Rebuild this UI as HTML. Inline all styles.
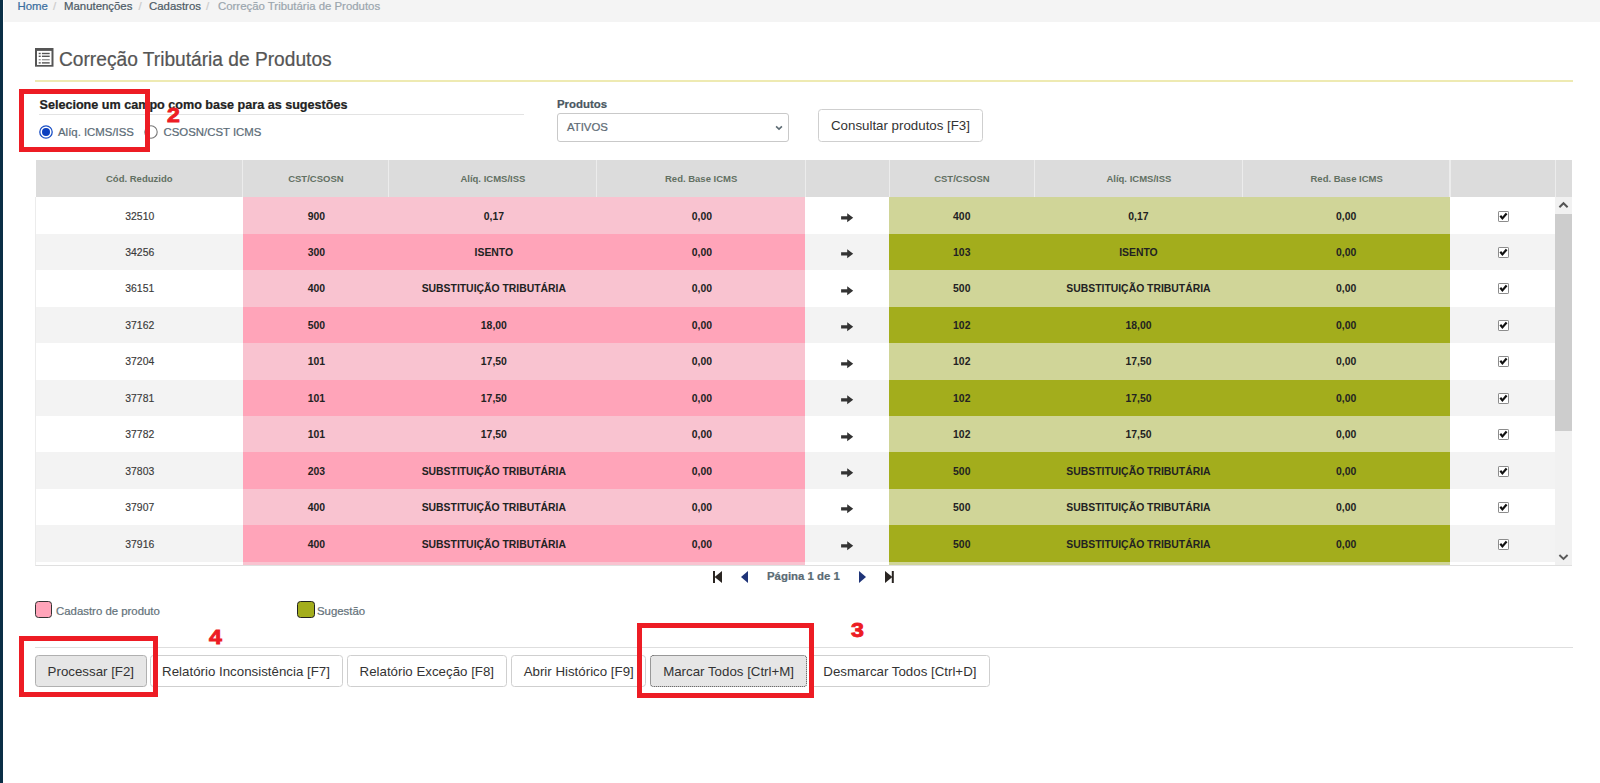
<!DOCTYPE html><html><head><meta charset="utf-8"><title>Correção Tributária de Produtos</title><style>
*{box-sizing:border-box;margin:0;padding:0}
html,body{width:1600px;height:783px;overflow:hidden;background:#fff;font-family:"Liberation Sans",sans-serif;position:relative}
.ct,.t{-webkit-text-stroke:0.22px currentColor}

.a{position:absolute}
.lbar{left:0;top:0;width:3px;height:783px;background:#0a2f46}
.crumb{left:4px;top:0;width:1596px;height:21.5px;background:#f4f4f4}
.ct{position:absolute;top:0.4px;font-size:11.4px;line-height:13px;white-space:nowrap}
.t{white-space:nowrap}
.cell{position:absolute;display:flex;align-items:center;justify-content:center;font-weight:bold;font-size:10.4px;color:#222;white-space:nowrap;padding-top:1px}
.hcell{position:absolute;display:flex;align-items:center;justify-content:center;font-weight:bold;font-size:9.5px;color:#627062;white-space:nowrap}
.btn{position:absolute;top:655px;height:32px;border:1px solid #cfcfcf;border-radius:3.5px;background:#fff;color:#333;font-size:13.3px;display:flex;align-items:center;justify-content:center;white-space:nowrap}
.btn.act{background:#e6e6e6;border-color:#b0b0b0}
.red{position:absolute;border:5px solid #ed1c24}
.num{position:absolute;color:#ed1c24;font-weight:bold;font-size:20.5px;line-height:20px;-webkit-text-stroke:0.9px #ed1c24;transform:scaleX(1.13);transform-origin:0 0}
</style></head><body>
<div class="a lbar"></div>
<div class="a crumb"></div>
<span class="ct" style="left:17.5px;color:#3b6fa0">Home</span>
<span class="ct" style="left:53px;color:#ccc">/</span>
<span class="ct" style="left:64px;color:#4d5b66">Manutenções</span>
<span class="ct" style="left:138.5px;color:#ccc">/</span>
<span class="ct" style="left:149px;color:#4d5b66">Cadastros</span>
<span class="ct" style="left:206px;color:#ccc">/</span>
<span class="ct" style="left:218px;color:#9ba6ae">Correção Tributária de Produtos</span>
<svg class="a" style="left:35.2px;top:48px" width="18.5" height="18.7" viewBox="0 0 18.5 18.7">
<rect x="0" y="0" width="18.5" height="18.7" fill="#555"/>
<rect x="2" y="2.9" width="14.5" height="14.1" fill="#fff"/>
<rect x="3.7" y="4.8" width="2" height="1.4" fill="#555"/><rect x="6.9" y="4.8" width="7.8" height="1.4" fill="#555"/>
<rect x="3.7" y="7.6" width="2" height="1.4" fill="#555"/><rect x="6.9" y="7.6" width="7.8" height="1.4" fill="#555"/>
<rect x="3.7" y="11" width="2" height="1.4" fill="#999"/><rect x="6.9" y="11" width="7.8" height="1.4" fill="#999"/>
<rect x="3.7" y="14.2" width="2" height="1.4" fill="#555"/><rect x="6.9" y="14.2" width="7.8" height="1.4" fill="#555"/>
</svg>
<span class="a t" style="left:58.5px;top:47px;font-size:20px;line-height:24px;color:#555;transform:scaleX(0.958);transform-origin:0 0">Correção Tributária de Produtos</span>
<div class="a" style="left:34.5px;top:80px;width:1538.5px;height:2px;background:#eeeab2"></div>
<span class="a t" style="left:39.5px;top:98px;font-size:12.6px;line-height:15px;font-weight:bold;color:#222">Selecione um campo como base para as sugestões</span>
<div class="a" style="left:39px;top:114px;width:484.5px;height:1px;background:#e3e3e3"></div>
<svg class="a" style="left:39px;top:125px" width="14" height="14" viewBox="0 0 14 14">
<circle cx="7" cy="7" r="6.2" fill="#fff" stroke="#1a4fc4" stroke-width="1.3"/>
<circle cx="7" cy="7" r="4" fill="#0b3fbf"/></svg>
<span class="a t" style="left:58px;top:125.5px;font-size:11.4px;line-height:13px;color:#5b6b76">Alíq. ICMS/ISS</span>
<svg class="a" style="left:144px;top:125px" width="14" height="14" viewBox="0 0 14 14">
<circle cx="7" cy="7" r="6.2" fill="#fff" stroke="#777" stroke-width="1.1"/></svg>
<span class="a t" style="left:163.5px;top:125.5px;font-size:11.4px;line-height:13px;color:#5b6b76">CSOSN/CST ICMS</span>
<span class="a t" style="left:557px;top:97.5px;font-size:11.4px;line-height:13px;font-weight:bold;color:#4a5761">Produtos</span>
<div class="a" style="left:557px;top:113px;width:232px;height:29px;border:1px solid #c9c9c9;border-radius:3px;background:#fff"></div>
<span class="a t" style="left:567px;top:121px;font-size:11.4px;line-height:13px;color:#5e6b75">ATIVOS</span>
<svg class="a" style="left:775.4px;top:125px" width="8" height="6" viewBox="0 0 8 6"><path d="M1.1 1.3 L4 4.1 L6.9 1.3" fill="none" stroke="#5d6b73" stroke-width="1.6"/></svg>
<div class="btn" style="left:818px;top:109px;width:165px;height:33px">Consultar produtos [F3]</div>
<div class="a" style="left:35.5px;top:160px;width:1536.5px;height:37px;background:#dcdcdc"></div>
<div class="a" style="left:242.0px;top:160px;width:1.2px;height:37px;background:#ececec"></div>
<div class="a" style="left:387.8px;top:160px;width:1.2px;height:37px;background:#ececec"></div>
<div class="a" style="left:596.0px;top:160px;width:1.2px;height:37px;background:#ececec"></div>
<div class="a" style="left:804.8px;top:160px;width:1.2px;height:37px;background:#ececec"></div>
<div class="a" style="left:888.8px;top:160px;width:1.2px;height:37px;background:#ececec"></div>
<div class="a" style="left:1033.9px;top:160px;width:1.2px;height:37px;background:#ececec"></div>
<div class="a" style="left:1242.1px;top:160px;width:1.2px;height:37px;background:#ececec"></div>
<div class="a" style="left:1449.4px;top:160px;width:1.2px;height:37px;background:#ececec"></div>
<div class="a" style="left:1554.9px;top:160px;width:1.2px;height:37px;background:#ececec"></div>
<div class="hcell" style="left:35.5px;top:160px;width:207.50px;height:37px">Cód. Reduzido</div>
<div class="hcell" style="left:243px;top:160px;width:145.80px;height:37px">CST/CSOSN</div>
<div class="hcell" style="left:388.8px;top:160px;width:208.20px;height:37px">Alíq. ICMS/ISS</div>
<div class="hcell" style="left:597px;top:160px;width:208.30px;height:37px">Red. Base ICMS</div>
<div class="hcell" style="left:889px;top:160px;width:145.80px;height:37px">CST/CSOSN</div>
<div class="hcell" style="left:1034.8px;top:160px;width:208.20px;height:37px">Alíq. ICMS/ISS</div>
<div class="hcell" style="left:1243px;top:160px;width:207.30px;height:37px">Red. Base ICMS</div>
<div class="a" style="left:35px;top:197px;width:1537px;height:369px;overflow:hidden;border-left:1px solid #ececec;border-bottom:1px solid #e0e0e0">
<div class="cell" style="left:0.00px;top:0.30px;width:207.00px;height:36.45px;background:#fff;color:#3a3a3a;font-weight:normal;-webkit-text-stroke:0.15px #3a3a3a;padding-left:0.50px;">32510</div>
<div class="cell" style="left:207.00px;top:0.30px;width:145.80px;height:36.45px;background:#f9c3d0;color:#222;padding-left:0.80px;">900</div>
<div class="cell" style="left:352.80px;top:0.30px;width:208.20px;height:36.45px;background:#f9c3d0;color:#222;padding-left:1.90px;">0,17</div>
<div class="cell" style="left:561.00px;top:0.30px;width:208.30px;height:36.45px;background:#f9c3d0;color:#222;padding-left:1.40px;">0,00</div>
<div class="cell" style="left:769.30px;top:0.30px;width:83.70px;height:36.45px;background:#fff;color:#222;padding-right:0.00px;"><svg width="13" height="10" viewBox="0 0 13 10" style="position:relative;top:1.8px;left:0.5px"><path d="M0.1 3.2 H6.2 V0.2 L12.2 4.7 L6.2 9.2 V6.4 H0.1 Z" fill="#333"/></svg></div>
<div class="cell" style="left:853.00px;top:0.30px;width:145.80px;height:36.45px;background:#d0d598;color:#222;padding-right:0.30px;">400</div>
<div class="cell" style="left:998.80px;top:0.30px;width:208.20px;height:36.45px;background:#d0d598;color:#222;padding-right:0.90px;">0,17</div>
<div class="cell" style="left:1207.00px;top:0.30px;width:207.30px;height:36.45px;background:#d0d598;color:#222;padding-right:0.90px;">0,00</div>
<div class="cell" style="left:1414.30px;top:0.30px;width:105.00px;height:36.45px;background:#fff;color:#222;padding-right:0.00px;"><svg width="11" height="11" viewBox="0 0 11 11" style="position:relative;top:0px;left:1.2px"><rect x="0.5" y="0.5" width="10" height="10" rx="0.6" fill="#fff" stroke="#8c8c8c"/><path d="M2.3 4.8 L4.4 7.4 L8.6 2.5" fill="none" stroke="#111" stroke-width="2.2"/></svg></div>
<div class="cell" style="left:0.00px;top:36.75px;width:207.00px;height:36.45px;background:#f3f3f3;color:#3a3a3a;font-weight:normal;-webkit-text-stroke:0.15px #3a3a3a;padding-left:0.50px;">34256</div>
<div class="cell" style="left:207.00px;top:36.75px;width:145.80px;height:36.45px;background:#ffa4b9;color:#222;padding-left:0.80px;">300</div>
<div class="cell" style="left:352.80px;top:36.75px;width:208.20px;height:36.45px;background:#ffa4b9;color:#222;padding-left:1.90px;">ISENTO</div>
<div class="cell" style="left:561.00px;top:36.75px;width:208.30px;height:36.45px;background:#ffa4b9;color:#222;padding-left:1.40px;">0,00</div>
<div class="cell" style="left:769.30px;top:36.75px;width:83.70px;height:36.45px;background:#f3f3f3;color:#222;padding-right:0.00px;"><svg width="13" height="10" viewBox="0 0 13 10" style="position:relative;top:1.8px;left:0.5px"><path d="M0.1 3.2 H6.2 V0.2 L12.2 4.7 L6.2 9.2 V6.4 H0.1 Z" fill="#333"/></svg></div>
<div class="cell" style="left:853.00px;top:36.75px;width:145.80px;height:36.45px;background:#a3ad1c;color:#222;padding-right:0.30px;">103</div>
<div class="cell" style="left:998.80px;top:36.75px;width:208.20px;height:36.45px;background:#a3ad1c;color:#222;padding-right:0.90px;">ISENTO</div>
<div class="cell" style="left:1207.00px;top:36.75px;width:207.30px;height:36.45px;background:#a3ad1c;color:#222;padding-right:0.90px;">0,00</div>
<div class="cell" style="left:1414.30px;top:36.75px;width:105.00px;height:36.45px;background:#f3f3f3;color:#222;padding-right:0.00px;"><svg width="11" height="11" viewBox="0 0 11 11" style="position:relative;top:0px;left:1.2px"><rect x="0.5" y="0.5" width="10" height="10" rx="0.6" fill="#fff" stroke="#8c8c8c"/><path d="M2.3 4.8 L4.4 7.4 L8.6 2.5" fill="none" stroke="#111" stroke-width="2.2"/></svg></div>
<div class="cell" style="left:0.00px;top:73.20px;width:207.00px;height:36.45px;background:#fff;color:#3a3a3a;font-weight:normal;-webkit-text-stroke:0.15px #3a3a3a;padding-left:0.50px;">36151</div>
<div class="cell" style="left:207.00px;top:73.20px;width:145.80px;height:36.45px;background:#f9c3d0;color:#222;padding-left:0.80px;">400</div>
<div class="cell" style="left:352.80px;top:73.20px;width:208.20px;height:36.45px;background:#f9c3d0;color:#222;padding-left:1.90px;">SUBSTITUIÇÃO TRIBUTÁRIA</div>
<div class="cell" style="left:561.00px;top:73.20px;width:208.30px;height:36.45px;background:#f9c3d0;color:#222;padding-left:1.40px;">0,00</div>
<div class="cell" style="left:769.30px;top:73.20px;width:83.70px;height:36.45px;background:#fff;color:#222;padding-right:0.00px;"><svg width="13" height="10" viewBox="0 0 13 10" style="position:relative;top:1.8px;left:0.5px"><path d="M0.1 3.2 H6.2 V0.2 L12.2 4.7 L6.2 9.2 V6.4 H0.1 Z" fill="#333"/></svg></div>
<div class="cell" style="left:853.00px;top:73.20px;width:145.80px;height:36.45px;background:#d0d598;color:#222;padding-right:0.30px;">500</div>
<div class="cell" style="left:998.80px;top:73.20px;width:208.20px;height:36.45px;background:#d0d598;color:#222;padding-right:0.90px;">SUBSTITUIÇÃO TRIBUTÁRIA</div>
<div class="cell" style="left:1207.00px;top:73.20px;width:207.30px;height:36.45px;background:#d0d598;color:#222;padding-right:0.90px;">0,00</div>
<div class="cell" style="left:1414.30px;top:73.20px;width:105.00px;height:36.45px;background:#fff;color:#222;padding-right:0.00px;"><svg width="11" height="11" viewBox="0 0 11 11" style="position:relative;top:0px;left:1.2px"><rect x="0.5" y="0.5" width="10" height="10" rx="0.6" fill="#fff" stroke="#8c8c8c"/><path d="M2.3 4.8 L4.4 7.4 L8.6 2.5" fill="none" stroke="#111" stroke-width="2.2"/></svg></div>
<div class="cell" style="left:0.00px;top:109.65px;width:207.00px;height:36.45px;background:#f3f3f3;color:#3a3a3a;font-weight:normal;-webkit-text-stroke:0.15px #3a3a3a;padding-left:0.50px;">37162</div>
<div class="cell" style="left:207.00px;top:109.65px;width:145.80px;height:36.45px;background:#ffa4b9;color:#222;padding-left:0.80px;">500</div>
<div class="cell" style="left:352.80px;top:109.65px;width:208.20px;height:36.45px;background:#ffa4b9;color:#222;padding-left:1.90px;">18,00</div>
<div class="cell" style="left:561.00px;top:109.65px;width:208.30px;height:36.45px;background:#ffa4b9;color:#222;padding-left:1.40px;">0,00</div>
<div class="cell" style="left:769.30px;top:109.65px;width:83.70px;height:36.45px;background:#f3f3f3;color:#222;padding-right:0.00px;"><svg width="13" height="10" viewBox="0 0 13 10" style="position:relative;top:1.8px;left:0.5px"><path d="M0.1 3.2 H6.2 V0.2 L12.2 4.7 L6.2 9.2 V6.4 H0.1 Z" fill="#333"/></svg></div>
<div class="cell" style="left:853.00px;top:109.65px;width:145.80px;height:36.45px;background:#a3ad1c;color:#222;padding-right:0.30px;">102</div>
<div class="cell" style="left:998.80px;top:109.65px;width:208.20px;height:36.45px;background:#a3ad1c;color:#222;padding-right:0.90px;">18,00</div>
<div class="cell" style="left:1207.00px;top:109.65px;width:207.30px;height:36.45px;background:#a3ad1c;color:#222;padding-right:0.90px;">0,00</div>
<div class="cell" style="left:1414.30px;top:109.65px;width:105.00px;height:36.45px;background:#f3f3f3;color:#222;padding-right:0.00px;"><svg width="11" height="11" viewBox="0 0 11 11" style="position:relative;top:0px;left:1.2px"><rect x="0.5" y="0.5" width="10" height="10" rx="0.6" fill="#fff" stroke="#8c8c8c"/><path d="M2.3 4.8 L4.4 7.4 L8.6 2.5" fill="none" stroke="#111" stroke-width="2.2"/></svg></div>
<div class="cell" style="left:0.00px;top:146.10px;width:207.00px;height:36.45px;background:#fff;color:#3a3a3a;font-weight:normal;-webkit-text-stroke:0.15px #3a3a3a;padding-left:0.50px;">37204</div>
<div class="cell" style="left:207.00px;top:146.10px;width:145.80px;height:36.45px;background:#f9c3d0;color:#222;padding-left:0.80px;">101</div>
<div class="cell" style="left:352.80px;top:146.10px;width:208.20px;height:36.45px;background:#f9c3d0;color:#222;padding-left:1.90px;">17,50</div>
<div class="cell" style="left:561.00px;top:146.10px;width:208.30px;height:36.45px;background:#f9c3d0;color:#222;padding-left:1.40px;">0,00</div>
<div class="cell" style="left:769.30px;top:146.10px;width:83.70px;height:36.45px;background:#fff;color:#222;padding-right:0.00px;"><svg width="13" height="10" viewBox="0 0 13 10" style="position:relative;top:1.8px;left:0.5px"><path d="M0.1 3.2 H6.2 V0.2 L12.2 4.7 L6.2 9.2 V6.4 H0.1 Z" fill="#333"/></svg></div>
<div class="cell" style="left:853.00px;top:146.10px;width:145.80px;height:36.45px;background:#d0d598;color:#222;padding-right:0.30px;">102</div>
<div class="cell" style="left:998.80px;top:146.10px;width:208.20px;height:36.45px;background:#d0d598;color:#222;padding-right:0.90px;">17,50</div>
<div class="cell" style="left:1207.00px;top:146.10px;width:207.30px;height:36.45px;background:#d0d598;color:#222;padding-right:0.90px;">0,00</div>
<div class="cell" style="left:1414.30px;top:146.10px;width:105.00px;height:36.45px;background:#fff;color:#222;padding-right:0.00px;"><svg width="11" height="11" viewBox="0 0 11 11" style="position:relative;top:0px;left:1.2px"><rect x="0.5" y="0.5" width="10" height="10" rx="0.6" fill="#fff" stroke="#8c8c8c"/><path d="M2.3 4.8 L4.4 7.4 L8.6 2.5" fill="none" stroke="#111" stroke-width="2.2"/></svg></div>
<div class="cell" style="left:0.00px;top:182.55px;width:207.00px;height:36.45px;background:#f3f3f3;color:#3a3a3a;font-weight:normal;-webkit-text-stroke:0.15px #3a3a3a;padding-left:0.50px;">37781</div>
<div class="cell" style="left:207.00px;top:182.55px;width:145.80px;height:36.45px;background:#ffa4b9;color:#222;padding-left:0.80px;">101</div>
<div class="cell" style="left:352.80px;top:182.55px;width:208.20px;height:36.45px;background:#ffa4b9;color:#222;padding-left:1.90px;">17,50</div>
<div class="cell" style="left:561.00px;top:182.55px;width:208.30px;height:36.45px;background:#ffa4b9;color:#222;padding-left:1.40px;">0,00</div>
<div class="cell" style="left:769.30px;top:182.55px;width:83.70px;height:36.45px;background:#f3f3f3;color:#222;padding-right:0.00px;"><svg width="13" height="10" viewBox="0 0 13 10" style="position:relative;top:1.8px;left:0.5px"><path d="M0.1 3.2 H6.2 V0.2 L12.2 4.7 L6.2 9.2 V6.4 H0.1 Z" fill="#333"/></svg></div>
<div class="cell" style="left:853.00px;top:182.55px;width:145.80px;height:36.45px;background:#a3ad1c;color:#222;padding-right:0.30px;">102</div>
<div class="cell" style="left:998.80px;top:182.55px;width:208.20px;height:36.45px;background:#a3ad1c;color:#222;padding-right:0.90px;">17,50</div>
<div class="cell" style="left:1207.00px;top:182.55px;width:207.30px;height:36.45px;background:#a3ad1c;color:#222;padding-right:0.90px;">0,00</div>
<div class="cell" style="left:1414.30px;top:182.55px;width:105.00px;height:36.45px;background:#f3f3f3;color:#222;padding-right:0.00px;"><svg width="11" height="11" viewBox="0 0 11 11" style="position:relative;top:0px;left:1.2px"><rect x="0.5" y="0.5" width="10" height="10" rx="0.6" fill="#fff" stroke="#8c8c8c"/><path d="M2.3 4.8 L4.4 7.4 L8.6 2.5" fill="none" stroke="#111" stroke-width="2.2"/></svg></div>
<div class="cell" style="left:0.00px;top:219.00px;width:207.00px;height:36.45px;background:#fff;color:#3a3a3a;font-weight:normal;-webkit-text-stroke:0.15px #3a3a3a;padding-left:0.50px;">37782</div>
<div class="cell" style="left:207.00px;top:219.00px;width:145.80px;height:36.45px;background:#f9c3d0;color:#222;padding-left:0.80px;">101</div>
<div class="cell" style="left:352.80px;top:219.00px;width:208.20px;height:36.45px;background:#f9c3d0;color:#222;padding-left:1.90px;">17,50</div>
<div class="cell" style="left:561.00px;top:219.00px;width:208.30px;height:36.45px;background:#f9c3d0;color:#222;padding-left:1.40px;">0,00</div>
<div class="cell" style="left:769.30px;top:219.00px;width:83.70px;height:36.45px;background:#fff;color:#222;padding-right:0.00px;"><svg width="13" height="10" viewBox="0 0 13 10" style="position:relative;top:1.8px;left:0.5px"><path d="M0.1 3.2 H6.2 V0.2 L12.2 4.7 L6.2 9.2 V6.4 H0.1 Z" fill="#333"/></svg></div>
<div class="cell" style="left:853.00px;top:219.00px;width:145.80px;height:36.45px;background:#d0d598;color:#222;padding-right:0.30px;">102</div>
<div class="cell" style="left:998.80px;top:219.00px;width:208.20px;height:36.45px;background:#d0d598;color:#222;padding-right:0.90px;">17,50</div>
<div class="cell" style="left:1207.00px;top:219.00px;width:207.30px;height:36.45px;background:#d0d598;color:#222;padding-right:0.90px;">0,00</div>
<div class="cell" style="left:1414.30px;top:219.00px;width:105.00px;height:36.45px;background:#fff;color:#222;padding-right:0.00px;"><svg width="11" height="11" viewBox="0 0 11 11" style="position:relative;top:0px;left:1.2px"><rect x="0.5" y="0.5" width="10" height="10" rx="0.6" fill="#fff" stroke="#8c8c8c"/><path d="M2.3 4.8 L4.4 7.4 L8.6 2.5" fill="none" stroke="#111" stroke-width="2.2"/></svg></div>
<div class="cell" style="left:0.00px;top:255.45px;width:207.00px;height:36.45px;background:#f3f3f3;color:#3a3a3a;font-weight:normal;-webkit-text-stroke:0.15px #3a3a3a;padding-left:0.50px;">37803</div>
<div class="cell" style="left:207.00px;top:255.45px;width:145.80px;height:36.45px;background:#ffa4b9;color:#222;padding-left:0.80px;">203</div>
<div class="cell" style="left:352.80px;top:255.45px;width:208.20px;height:36.45px;background:#ffa4b9;color:#222;padding-left:1.90px;">SUBSTITUIÇÃO TRIBUTÁRIA</div>
<div class="cell" style="left:561.00px;top:255.45px;width:208.30px;height:36.45px;background:#ffa4b9;color:#222;padding-left:1.40px;">0,00</div>
<div class="cell" style="left:769.30px;top:255.45px;width:83.70px;height:36.45px;background:#f3f3f3;color:#222;padding-right:0.00px;"><svg width="13" height="10" viewBox="0 0 13 10" style="position:relative;top:1.8px;left:0.5px"><path d="M0.1 3.2 H6.2 V0.2 L12.2 4.7 L6.2 9.2 V6.4 H0.1 Z" fill="#333"/></svg></div>
<div class="cell" style="left:853.00px;top:255.45px;width:145.80px;height:36.45px;background:#a3ad1c;color:#222;padding-right:0.30px;">500</div>
<div class="cell" style="left:998.80px;top:255.45px;width:208.20px;height:36.45px;background:#a3ad1c;color:#222;padding-right:0.90px;">SUBSTITUIÇÃO TRIBUTÁRIA</div>
<div class="cell" style="left:1207.00px;top:255.45px;width:207.30px;height:36.45px;background:#a3ad1c;color:#222;padding-right:0.90px;">0,00</div>
<div class="cell" style="left:1414.30px;top:255.45px;width:105.00px;height:36.45px;background:#f3f3f3;color:#222;padding-right:0.00px;"><svg width="11" height="11" viewBox="0 0 11 11" style="position:relative;top:0px;left:1.2px"><rect x="0.5" y="0.5" width="10" height="10" rx="0.6" fill="#fff" stroke="#8c8c8c"/><path d="M2.3 4.8 L4.4 7.4 L8.6 2.5" fill="none" stroke="#111" stroke-width="2.2"/></svg></div>
<div class="cell" style="left:0.00px;top:291.90px;width:207.00px;height:36.45px;background:#fff;color:#3a3a3a;font-weight:normal;-webkit-text-stroke:0.15px #3a3a3a;padding-left:0.50px;">37907</div>
<div class="cell" style="left:207.00px;top:291.90px;width:145.80px;height:36.45px;background:#f9c3d0;color:#222;padding-left:0.80px;">400</div>
<div class="cell" style="left:352.80px;top:291.90px;width:208.20px;height:36.45px;background:#f9c3d0;color:#222;padding-left:1.90px;">SUBSTITUIÇÃO TRIBUTÁRIA</div>
<div class="cell" style="left:561.00px;top:291.90px;width:208.30px;height:36.45px;background:#f9c3d0;color:#222;padding-left:1.40px;">0,00</div>
<div class="cell" style="left:769.30px;top:291.90px;width:83.70px;height:36.45px;background:#fff;color:#222;padding-right:0.00px;"><svg width="13" height="10" viewBox="0 0 13 10" style="position:relative;top:1.8px;left:0.5px"><path d="M0.1 3.2 H6.2 V0.2 L12.2 4.7 L6.2 9.2 V6.4 H0.1 Z" fill="#333"/></svg></div>
<div class="cell" style="left:853.00px;top:291.90px;width:145.80px;height:36.45px;background:#d0d598;color:#222;padding-right:0.30px;">500</div>
<div class="cell" style="left:998.80px;top:291.90px;width:208.20px;height:36.45px;background:#d0d598;color:#222;padding-right:0.90px;">SUBSTITUIÇÃO TRIBUTÁRIA</div>
<div class="cell" style="left:1207.00px;top:291.90px;width:207.30px;height:36.45px;background:#d0d598;color:#222;padding-right:0.90px;">0,00</div>
<div class="cell" style="left:1414.30px;top:291.90px;width:105.00px;height:36.45px;background:#fff;color:#222;padding-right:0.00px;"><svg width="11" height="11" viewBox="0 0 11 11" style="position:relative;top:0px;left:1.2px"><rect x="0.5" y="0.5" width="10" height="10" rx="0.6" fill="#fff" stroke="#8c8c8c"/><path d="M2.3 4.8 L4.4 7.4 L8.6 2.5" fill="none" stroke="#111" stroke-width="2.2"/></svg></div>
<div class="cell" style="left:0.00px;top:328.35px;width:207.00px;height:36.45px;background:#f3f3f3;color:#3a3a3a;font-weight:normal;-webkit-text-stroke:0.15px #3a3a3a;padding-left:0.50px;">37916</div>
<div class="cell" style="left:207.00px;top:328.35px;width:145.80px;height:36.45px;background:#ffa4b9;color:#222;padding-left:0.80px;">400</div>
<div class="cell" style="left:352.80px;top:328.35px;width:208.20px;height:36.45px;background:#ffa4b9;color:#222;padding-left:1.90px;">SUBSTITUIÇÃO TRIBUTÁRIA</div>
<div class="cell" style="left:561.00px;top:328.35px;width:208.30px;height:36.45px;background:#ffa4b9;color:#222;padding-left:1.40px;">0,00</div>
<div class="cell" style="left:769.30px;top:328.35px;width:83.70px;height:36.45px;background:#f3f3f3;color:#222;padding-right:0.00px;"><svg width="13" height="10" viewBox="0 0 13 10" style="position:relative;top:1.8px;left:0.5px"><path d="M0.1 3.2 H6.2 V0.2 L12.2 4.7 L6.2 9.2 V6.4 H0.1 Z" fill="#333"/></svg></div>
<div class="cell" style="left:853.00px;top:328.35px;width:145.80px;height:36.45px;background:#a3ad1c;color:#222;padding-right:0.30px;">500</div>
<div class="cell" style="left:998.80px;top:328.35px;width:208.20px;height:36.45px;background:#a3ad1c;color:#222;padding-right:0.90px;">SUBSTITUIÇÃO TRIBUTÁRIA</div>
<div class="cell" style="left:1207.00px;top:328.35px;width:207.30px;height:36.45px;background:#a3ad1c;color:#222;padding-right:0.90px;">0,00</div>
<div class="cell" style="left:1414.30px;top:328.35px;width:105.00px;height:36.45px;background:#f3f3f3;color:#222;padding-right:0.00px;"><svg width="11" height="11" viewBox="0 0 11 11" style="position:relative;top:0px;left:1.2px"><rect x="0.5" y="0.5" width="10" height="10" rx="0.6" fill="#fff" stroke="#8c8c8c"/><path d="M2.3 4.8 L4.4 7.4 L8.6 2.5" fill="none" stroke="#111" stroke-width="2.2"/></svg></div>
<div class="cell" style="left:0.00px;top:364.80px;width:207.00px;height:36.45px;background:#fff;color:#3a3a3a;font-weight:normal;-webkit-text-stroke:0.15px #3a3a3a;padding-left:0.50px;">37920</div>
<div class="cell" style="left:207.00px;top:364.80px;width:145.80px;height:36.45px;background:#f9c3d0;color:#222;padding-left:0.80px;">400</div>
<div class="cell" style="left:352.80px;top:364.80px;width:208.20px;height:36.45px;background:#f9c3d0;color:#222;padding-left:1.90px;">SUBSTITUIÇÃO TRIBUTÁRIA</div>
<div class="cell" style="left:561.00px;top:364.80px;width:208.30px;height:36.45px;background:#f9c3d0;color:#222;padding-left:1.40px;">0,00</div>
<div class="cell" style="left:769.30px;top:364.80px;width:83.70px;height:36.45px;background:#fff;color:#222;padding-right:0.00px;"><svg width="13" height="10" viewBox="0 0 13 10" style="position:relative;top:1.8px;left:0.5px"><path d="M0.1 3.2 H6.2 V0.2 L12.2 4.7 L6.2 9.2 V6.4 H0.1 Z" fill="#333"/></svg></div>
<div class="cell" style="left:853.00px;top:364.80px;width:145.80px;height:36.45px;background:#d0d598;color:#222;padding-right:0.30px;">500</div>
<div class="cell" style="left:998.80px;top:364.80px;width:208.20px;height:36.45px;background:#d0d598;color:#222;padding-right:0.90px;">SUBSTITUIÇÃO TRIBUTÁRIA</div>
<div class="cell" style="left:1207.00px;top:364.80px;width:207.30px;height:36.45px;background:#d0d598;color:#222;padding-right:0.90px;">0,00</div>
<div class="cell" style="left:1414.30px;top:364.80px;width:105.00px;height:36.45px;background:#fff;color:#222;padding-right:0.00px;"><svg width="11" height="11" viewBox="0 0 11 11" style="position:relative;top:0px;left:1.2px"><rect x="0.5" y="0.5" width="10" height="10" rx="0.6" fill="#fff" stroke="#8c8c8c"/><path d="M2.3 4.8 L4.4 7.4 L8.6 2.5" fill="none" stroke="#111" stroke-width="2.2"/></svg></div>
<div class="a" style="left:1519px;top:0;width:16.6px;height:369px;background:#f1f1f1"></div>
<div class="a" style="left:1519px;top:17.4px;width:16.6px;height:216.6px;background:#cdcdcd"></div>
<svg class="a" style="left:1521px;top:3.2px" width="13" height="9" viewBox="0 0 13 9"><path d="M2.4 7.2 L6.5 3.2 L10.6 7.2" fill="none" stroke="#555" stroke-width="2"/></svg>
<svg class="a" style="left:1521px;top:356.3px" width="13" height="9" viewBox="0 0 13 9"><path d="M2.4 2 L6.5 6 L10.6 2" fill="none" stroke="#5a5a5a" stroke-width="1.9"/></svg>
</div>
<svg class="a" style="left:712px;top:570px" width="11" height="14" viewBox="0 0 11 14"><rect x="1" y="1" width="2" height="12" fill="#2a2522"/><path d="M2.6 6.9 L10 1 V13 Z" fill="#2a2522"/></svg>
<svg class="a" style="left:740px;top:570px" width="9" height="14" viewBox="0 0 9 14"><path d="M1 6.9 L8 1 V13 Z" fill="#1f3478"/></svg>
<span class="a t" style="left:767px;top:569.5px;font-size:11.4px;line-height:13px;font-weight:bold;color:#5a6b74">Página 1 de 1</span>
<svg class="a" style="left:858px;top:570px" width="9" height="14" viewBox="0 0 9 14"><path d="M1 1 L8 6.9 L1 13 Z" fill="#1f3478"/></svg>
<svg class="a" style="left:884px;top:570px" width="11" height="14" viewBox="0 0 11 14"><rect x="7.8" y="1" width="2" height="12" fill="#2a2522"/><path d="M1 1 L8.4 6.9 L1 13 Z" fill="#2a2522"/></svg>
<div class="a" style="left:35.4px;top:601px;width:17px;height:16.5px;border:1.3px solid #333;border-radius:3.5px;background:#ffa4b9"></div>
<span class="a t" style="left:56px;top:604.5px;font-size:11.4px;line-height:13px;color:#64727a">Cadastro de produto</span>
<div class="a" style="left:297px;top:601px;width:17.5px;height:17px;border:1.3px solid #222;border-radius:3.5px;background:#a3ad1c"></div>
<span class="a t" style="left:317px;top:604.5px;font-size:11.4px;line-height:13px;color:#64727a">Sugestão</span>
<div class="a" style="left:34.5px;top:647px;width:1538.5px;height:1px;background:#dedede"></div>
<div class="btn act" style="left:35px;width:111.7px;">Processar [F2]</div>
<div class="btn" style="left:149.5px;width:193px;">Relatório Inconsistência [F7]</div>
<div class="btn" style="left:347px;width:159.6px;">Relatório Exceção [F8]</div>
<div class="btn" style="left:511px;width:135.4px;">Abrir Histórico [F9]</div>
<div class="btn act" style="left:650.4px;width:156.4px;border:1px dotted #4a4a4a;">Marcar Todos [Ctrl+M]</div>
<div class="btn" style="left:810px;width:179.8px;">Desmarcar Todos [Ctrl+D]</div>
<div class="red" style="left:19px;top:89px;width:130.5px;height:63.2px"></div>
<span class="num" style="left:166.8px;top:104.5px">2</span>
<div class="red" style="left:19.2px;top:636.4px;width:138.7px;height:60.6px"></div>
<span class="num" style="left:209.3px;top:626.5px">4</span>
<div class="red" style="left:636.6px;top:623px;width:177.1px;height:74.5px"></div>
<span class="num" style="left:850.9px;top:620px">3</span>
</body></html>
